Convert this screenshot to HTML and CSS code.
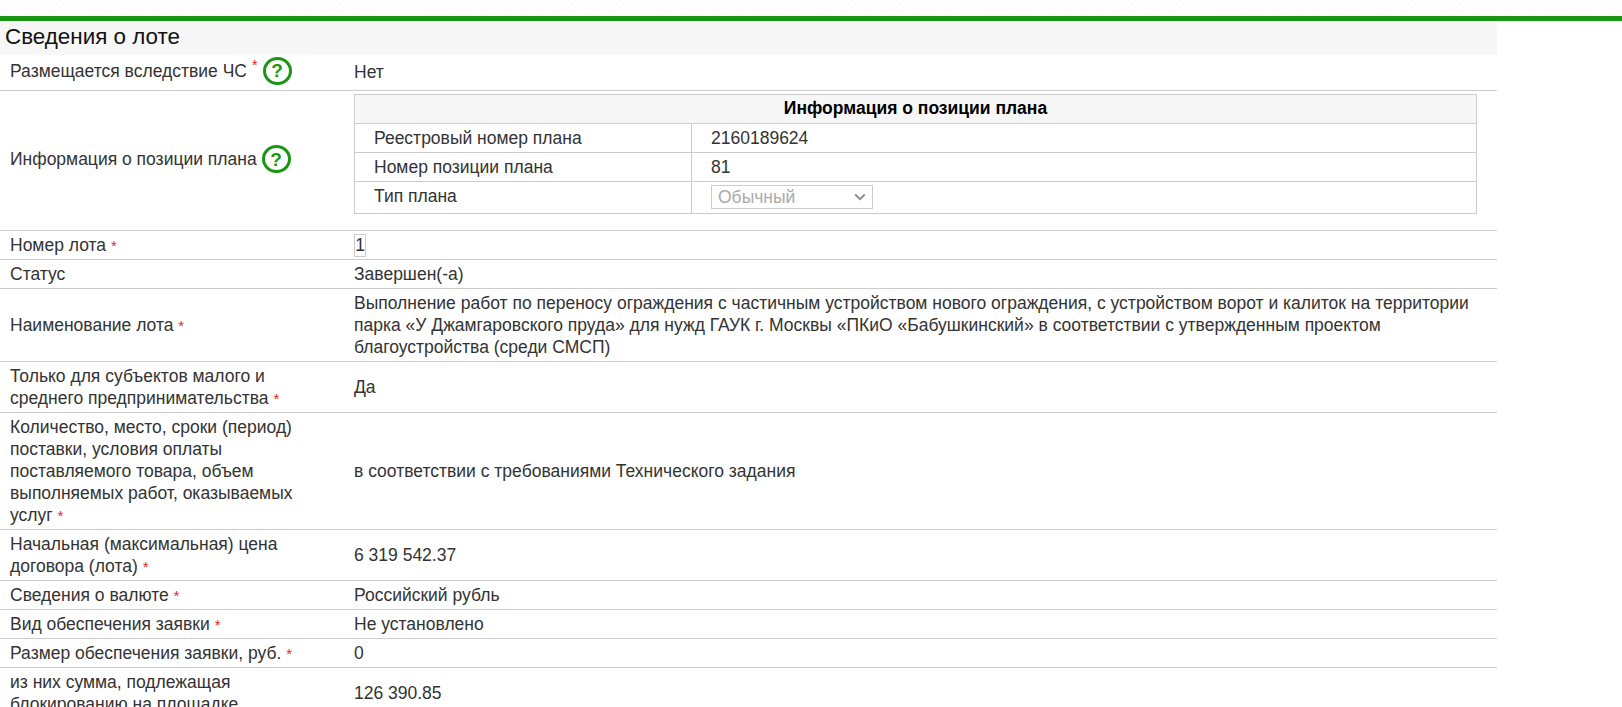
FILE: index.html
```html
<!DOCTYPE html>
<html lang="ru">
<head>
<meta charset="utf-8">
<title>Сведения о лоте</title>
<link rel="stylesheet" href="styles.css">
</head>
<body>
<div class="topbar"><span class="clipped">Порядок проведения конкурентной закупки и формирования протокола</span></div>
<section class="lot">
  <h2 class="lot-title">Сведения о лоте</h2>
  <div class="row r-help"><div class="label">Размещается вследствие ЧС <sup class="req">*</sup> <span class="help">?</span></div><div class="value">Нет</div></div>
  <div class="row"><div class="label">Информация о позиции плана <span class="help">?</span></div>
    <div class="value">
      <table class="plan">
        <tr><th colspan="2">Информация о позиции плана</th></tr>
        <tr><td class="k">Реестровый номер плана</td><td>2160189624</td></tr>
        <tr><td class="k">Номер позиции плана</td><td>81</td></tr>
        <tr><td class="k">Тип плана</td><td><span class="select">Обычный<svg class="chev" width="12" height="8" viewBox="0 0 12 8"><path d="M1.2 1.5L6 6.2l4.8-4.7" fill="none" stroke="#8a8a8a" stroke-width="1.8"/></svg></span></td></tr>
      </table>
    </div></div>
  <div class="row r-tight"><div class="label">Номер лота <span class="req">*</span></div><div class="value"><span class="num">1</span></div></div>
  <div class="row r-tight"><div class="label">Статус</div><div class="value">Завершен(-а)</div></div>
  <div class="row"><div class="label">Наименование лота <span class="req">*</span></div><div class="value">Выполнение работ по переносу ограждения с частичным устройством нового ограждения, с устройством ворот и калиток на территории парка «У Джамгаровского пруда» для нужд ГАУК г. Москвы «ПКиО «Бабушкинский» в соответствии с утвержденным проектом благоустройства (среди СМСП)</div></div>
  <div class="row"><div class="label">Только для субъектов малого и среднего предпринимательства <span class="req">*</span></div><div class="value">Да</div></div>
  <div class="row"><div class="label">Количество, место, сроки (период) поставки, условия оплаты поставляемого товара, объем выполняемых работ, оказываемых услуг <span class="req">*</span></div><div class="value">в соответствии с требованиями Технического задания</div></div>
  <div class="row"><div class="label">Начальная (максимальная) цена договора (лота) <span class="req">*</span></div><div class="value">6 319 542.37</div></div>
  <div class="row r-tight"><div class="label">Сведения о валюте <span class="req">*</span></div><div class="value">Российский рубль</div></div>
  <div class="row r-tight"><div class="label">Вид обеспечения заявки <span class="req">*</span></div><div class="value">Не установлено</div></div>
  <div class="row r-tight"><div class="label">Размер обеспечения заявки, руб. <span class="req">*</span></div><div class="value">0</div></div>
  <div class="row"><div class="label">из них сумма, подлежащая блокированию на площадке</div><div class="value">126 390.85</div></div>
</section>
</body>
</html>
```
FILE: styles.css
```css
* { box-sizing: border-box; }
html, body { margin: 0; height: 707px; overflow: hidden; background: #fff; }
body { font-family: "Liberation Sans", Arial, sans-serif; font-size: 17.5px; line-height: 22px; color: #333; }
.topbar { height: 21px; padding-right: 466px; border-bottom: 5px solid #1a9612; overflow: hidden; text-align: center; background: repeating-linear-gradient(-45deg, #fff 0 2px, #fcfcfc 2px 4px); }
.clipped { display: block; margin-top: -21px; }
.lot { width: 1497px; }
.lot-title { margin: 0; height: 34px; padding: 0 0 0 5px; background: #f7f7f7; font-size: 22.4px; font-weight: 400; line-height: 31px; color: #111; }
.row { display: grid; grid-template-columns: 354px 1fr; align-items: center; border-bottom: 1px solid #ccc; padding: 3px 0; }
.r-help { height: 36px; padding: 0 0 1px; }
.r-tight { height: 29px; padding: 0; }
.label { padding: 0 44px 0 10px; }
.value { padding-right: 20px; }
.req { color: #e22; font-size: 15px; line-height: 0; }
.help { display: inline-flex; width: 29px; height: 28px; margin-top: -3px; border: 3px solid #1a9612; border-radius: 50%; align-items: center; justify-content: center; color: #1a9612; font-weight: 700; font-size: 19px; line-height: 1; vertical-align: middle; }
.plan { width: 1123px; border-collapse: collapse; margin: 0 0 13px; }
.plan th, .plan td { border: 1px solid #ccc; padding: 3px 19px; font-size: 17.5px; text-align: left; vertical-align: top; }
.plan th { padding: 2px 19px 4px; background: #f7f7f7; color: #000; text-align: center; }
.plan .k { width: 337px; }
.select { display: flex; align-items: center; justify-content: space-between; width: 162px; height: 24px; padding: 0 6px; border: 1px solid #ccc; color: #aaa; margin-bottom: 1px; }
.num { display: inline-block; vertical-align: top; width: 12px; text-align: center; border: 1px solid #ccc; line-height: 21px; color: #333; }
```
